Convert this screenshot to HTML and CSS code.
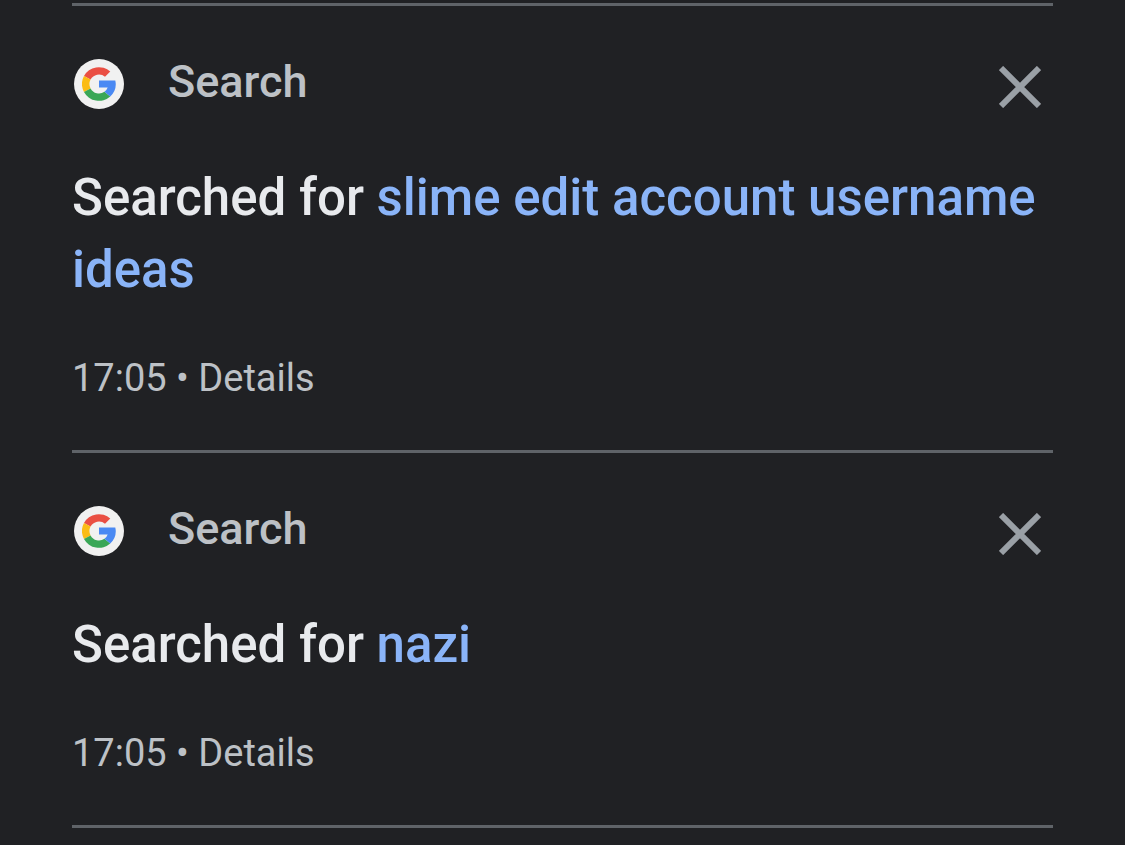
FILE: index.html
```html
<!DOCTYPE html>
<html lang="en">

<head>
    <meta charset="UTF-8">
    <meta name="viewport" content="width=device-width, initial-scale=1.0">
    <title>My Activity</title>
    <link rel="stylesheet" href="styles.css">
</head>

<body>
    <svg class="sprite" width="0" height="0" aria-hidden="true">
        <symbol id="google" viewBox="0 0 48 48">
            <path fill="#ea4f43" d="M2.8 12.8A24 24 0 0 1 39.9 6.3L32.5 13.6A13.5 13.5 0 0 0 12.1 17.7z"/>
            <path fill="#fbbc15" d="M2.8 12.8A24 24 0 0 0 2.8 35.2L12.1 30.3A13.5 13.5 0 0 1 12.1 17.7z"/>
            <path fill="#3aa757" d="M2.8 35.2A24 24 0 0 0 39.9 41.7L31.7 35.1A13.5 13.5 0 0 1 12.1 30.3z"/>
            <path fill="#4a89f3" d="M24 19H47A24 24 0 0 1 39.9 41.7L31.7 35.1A13.5 13.5 0 0 0 36.3 29H24z"/>
        </symbol>
        <symbol id="close" viewBox="0 0 42 42">
            <path d="M2 2l38 38M40 2L2 40" fill="none" stroke="currentColor" stroke-width="6"/>
        </symbol>
    </svg>

    <main class="activity">
        <article class="item">
            <header class="item-header">
                <span class="logo"><svg><use href="#google"/></svg></span>
                <span class="product">Search</span>
                <button class="close" type="button" aria-label="Delete activity item"><svg><use href="#close"/></svg></button>
            </header>
            <p class="query">Searched for <a href="#">slime edit account username ideas</a></p>
            <p class="meta">17:05 • <a href="#">Details</a></p>
        </article>

        <article class="item">
            <header class="item-header">
                <span class="logo"><svg><use href="#google"/></svg></span>
                <span class="product">Search</span>
                <button class="close" type="button" aria-label="Delete activity item"><svg><use href="#close"/></svg></button>
            </header>
            <p class="query">Searched for <a href="#">nazi</a></p>
            <p class="meta">17:05 • <a href="#">Details</a></p>
        </article>
    </main>
</body>

</html>
```
FILE: styles.css
```css
body {
    margin: 0;
    background-color: #202124;
    color: #e8eaed;
    font-family: Roboto, sans-serif;
}

.sprite {
    display: block;
}

.activity {
    margin: 3px 72px 0;
    border-bottom: 3px solid #5f6368;
}

.item {
    padding: 48px 0;
    border-top: 3px solid #5f6368;
}

.item-header {
    display: flex;
    align-items: center;
    height: 60px;
    padding: 0 12px 0 2px;
}

.logo {
    display: flex;
    align-items: center;
    justify-content: center;
    width: 50px;
    height: 50px;
    border-radius: 50%;
    background-color: #f1f1f1;
}

.logo svg {
    width: 34px;
    height: 34px;
}

.product {
    flex: 1;
    align-self: flex-start;
    margin-left: 44px;
    font-size: 45px;
    font-weight: 500;
    line-height: 56px;
    color: #bdc1c6;
}

.close {
    display: flex;
    align-self: flex-end;
    padding: 0 0 6px;
    border: 0;
    background: none;
    color: #9aa0a6;
    cursor: pointer;
}

.close svg {
    width: 42px;
    height: 42px;
}

.query {
    margin: 48px 0;
    font-size: 51px;
    font-weight: 500;
    line-height: 72px;
}

.query a {
    color: #8ab4f8;
    text-decoration: none;
}

.meta {
    margin: 0;
    font-size: 38px;
    line-height: 48px;
    color: #bdc1c6;
}

.meta a {
    color: inherit;
    text-decoration: none;
}
```
